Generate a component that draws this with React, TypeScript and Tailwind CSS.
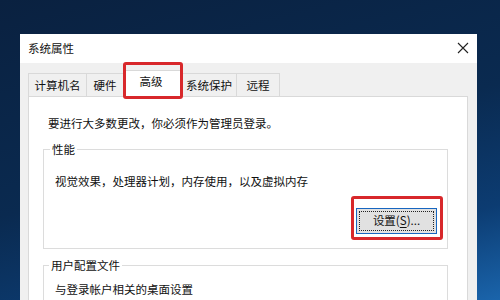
const tabs: { label: string; width: string; active?: boolean }[] = [
  { label: "计算机名", width: "w-[59px]" },
  { label: "硬件", width: "w-[37px]" },
  { label: "高级", width: "w-[58px]", active: true },
  { label: "系统保护", width: "w-[55px]" },
  { label: "远程", width: "w-[43px]" },
];

export default function App() {
  return (
    <div className="h-[300px] w-[500px] overflow-hidden bg-[linear-gradient(165deg,#0a2140_0%,#0a2a50_50%,#0c3c72_78%,#1a64ab_100%)] pl-[20px] pt-[34px] font-['Noto_Sans_CJK_SC','Microsoft_YaHei',sans-serif] text-[11.5px] text-[#111]">
      <div className="flex h-[290px] w-[457px] flex-col bg-[#f0f0f0]">
        {/* Title bar */}
        <div className="flex h-[29px] items-center justify-between bg-white pl-[8px] pr-[8px]">
          <span className="leading-none">系统属性</span>
          <svg width="12" height="12" viewBox="0 0 12 12" className="mt-[-2px]">
            <path d="M1 1 L11 11 M11 1 L1 11" stroke="#222" strokeWidth="1.1" fill="none" />
          </svg>
        </div>

        {/* Tabs */}
        <div className="flex flex-1 flex-col px-[8px] pt-[10px]">
          <div className="flex h-[23px] items-end">
            {tabs.map((t) =>
              t.active ? (
                <div
                  key={t.label}
                  className={`relative z-10 mb-[-1px] flex h-[27px] shrink-0 ${t.width} items-start justify-center border border-b-0 border-[#d9d9d9] bg-white pt-[2px] pr-[4px]`}
                >
                  {t.label}
                  <span className="pointer-events-none absolute -left-[2px] -right-[2px] -top-[9px] -bottom-[2px] rounded-[3px] border-[3px] border-[#d8282b]" />
                </div>
              ) : (
                <div
                  key={t.label}
                  className={`flex h-[23px] ${t.width} items-center justify-center border border-b-0 border-l-0 first:border-l border-[#d9d9d9] bg-[#f0f0f0] pt-[1px]`}
                >
                  {t.label}
                </div>
              )
            )}
          </div>

          {/* Panel */}
          <div className="w-[440px] flex-1 border border-[#d9d9d9] bg-white px-[14px] pt-[18px]">
            <p className="pl-[5px] leading-[16px]">要进行大多数更改，你必须作为管理员登录。</p>

            <fieldset className="mt-[10px] w-[405px] border border-[#dcdcdc] pb-[14px]">
              <legend className="ml-[6px] px-[2px] leading-[16px]">性能</legend>
              <div className="pl-[11px] pr-[10px]">
                <p className="mt-[16px] leading-[16px]">视觉效果，处理器计划，内存使用，以及虚拟内存</p>
                <div className="mt-[19px] flex justify-end">
                  <div className="relative">
                    <button className="flex h-[26px] w-[81px] items-center justify-center border border-[#1766c0] bg-[#e1e1e1] p-[2px]">
                      <span className="flex h-full w-full items-center justify-center border border-dotted border-[#222] leading-none">
                        设置(<span className="underline underline-offset-2">S</span>)...
                      </span>
                    </button>
                    <span className="pointer-events-none absolute -left-[5px] -right-[6px] -top-[12px] -bottom-[6px] rounded-[3px] border-[3px] border-[#d8282b]" />
                  </div>
                </div>
              </div>
            </fieldset>

            <fieldset className="mt-[8px] w-[405px] border border-[#dcdcdc] pb-[13px]">
              <legend className="ml-[5px] px-[2px] leading-[16px]">用户配置文件</legend>
              <div className="pl-[11px] pr-[10px]">
                <p className="mt-[8px] leading-[16px]">与登录帐户相关的桌面设置</p>
              </div>
            </fieldset>
          </div>
        </div>
      </div>
    </div>
  );
}
